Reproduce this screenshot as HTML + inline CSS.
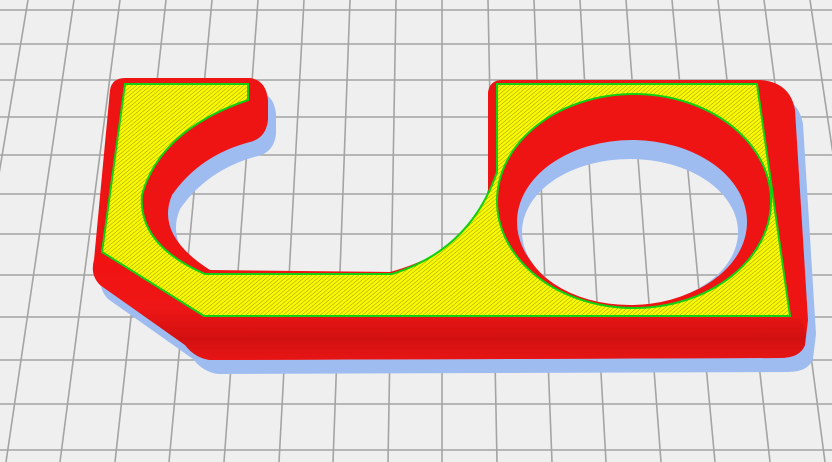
<!DOCTYPE html>
<html><head><meta charset="utf-8"><style>
html,body{margin:0;padding:0;background:#efefef;overflow:hidden}
svg{display:block}
</style></head><body>
<svg width="832" height="462" viewBox="0 0 832 462" xmlns="http://www.w3.org/2000/svg">
<defs>
<linearGradient id="front" x1="0" y1="0" x2="0" y2="1">
<stop offset="0" stop-color="#f21212"/><stop offset="0.5" stop-color="#ee1616"/><stop offset="0.8" stop-color="#d21010"/><stop offset="1" stop-color="#e81515"/>
</linearGradient>
<pattern id="hatch" width="3" height="3" patternUnits="userSpaceOnUse" patternTransform="rotate(-40)">
<rect width="3" height="3" fill="#fafa00"/><rect width="3" height="0.5" fill="#9a9800"/>
</pattern>
</defs>
<rect width="832" height="462" fill="#efefef"/>
<g stroke="#a4a4a4" stroke-width="1.6">
<line x1="0" y1="10" x2="832" y2="10"/><line x1="0" y1="44" x2="832" y2="44"/><line x1="0" y1="80" x2="832" y2="80"/><line x1="0" y1="117" x2="832" y2="117"/><line x1="0" y1="155" x2="832" y2="155"/><line x1="0" y1="194" x2="832" y2="194"/><line x1="0" y1="234" x2="832" y2="234"/><line x1="0" y1="275" x2="832" y2="275"/><line x1="0" y1="317" x2="832" y2="317"/><line x1="0" y1="360" x2="832" y2="360"/><line x1="0" y1="404" x2="832" y2="404"/><line x1="0" y1="450" x2="832" y2="450"/>
<line x1="-18" y1="0" x2="-104" y2="462"/><line x1="28" y1="0" x2="-49" y2="462"/><line x1="74" y1="0" x2="6" y2="462"/><line x1="120" y1="0" x2="60" y2="462"/><line x1="166" y1="0" x2="115" y2="462"/><line x1="212" y1="0" x2="169" y2="462"/><line x1="258" y1="0" x2="224" y2="462"/><line x1="304" y1="0" x2="279" y2="462"/><line x1="350" y1="0" x2="333" y2="462"/><line x1="396" y1="0" x2="388" y2="462"/><line x1="442" y1="0" x2="442" y2="462"/><line x1="488" y1="0" x2="497" y2="462"/><line x1="534" y1="0" x2="552" y2="462"/><line x1="580" y1="0" x2="606" y2="462"/><line x1="626" y1="0" x2="661" y2="462"/><line x1="672" y1="0" x2="715" y2="462"/><line x1="718" y1="0" x2="770" y2="462"/><line x1="764" y1="0" x2="825" y2="462"/><line x1="810" y1="0" x2="879" y2="462"/><line x1="856" y1="0" x2="934" y2="462"/>
</g>
<path transform="translate(8,14)" fill="#9fbcf0" d="M110,90 Q112,78 125,78 L250,78 Q266,80 268,100 L268,120 Q266,138 250,142 Q200,155 172,195 Q155,235 210,270 L390,272 Q470,250 488,190 L488,92 Q490,80 502,80 L760,80 Q790,82 795,110 L808,320 L805,345 Q800,358 780,358 L210,360 Q195,358 185,345 L100,285 Q90,275 94,260 Z"/>
<path fill="#ee1414" d="M110,90 Q112,78 125,78 L250,78 Q266,80 268,100 L268,120 Q266,138 250,142 Q200,155 172,195 Q155,235 210,270 L390,272 Q470,250 488,190 L488,92 Q490,80 502,80 L760,80 Q790,82 795,110 L808,320 L805,345 Q800,358 780,358 L210,360 Q195,358 185,345 L100,285 Q90,275 94,260 Z"/>
<path fill="url(#front)" d="M202,316 L800,318 L806,330 L805,345 Q800,358 780,358 L210,360 Q195,358 185,345 L100,285 Q90,275 94,260 L100,256 Z"/>
<path fill="url(#hatch)" stroke="#10d010" stroke-width="2" d="M125,84 L248,84 L248,100 Q160,130 142,195 Q138,245 205,274 L392,274 Q470,250 497,172 L497,84 L757,84 L790,316 L204,316 L102,252 Z"/>
<ellipse cx="634" cy="201" rx="137" ry="107" fill="#ee1414" stroke="#10d010" stroke-width="2"/>
<ellipse cx="632" cy="222" rx="115" ry="82" fill="#9fbcf0"/>
<ellipse cx="630" cy="232" rx="108" ry="73" fill="#efefef"/>
<clipPath id="ch"><ellipse cx="630" cy="232" rx="108" ry="73"/></clipPath>
<g stroke="#a4a4a4" stroke-width="1.6" clip-path="url(#ch)">
<line x1="0" y1="194" x2="832" y2="194"/><line x1="0" y1="234" x2="832" y2="234"/><line x1="0" y1="275" x2="832" y2="275"/>
<line x1="534" y1="0" x2="552" y2="462"/><line x1="580" y1="0" x2="606" y2="462"/><line x1="626" y1="0" x2="661" y2="462"/><line x1="672" y1="0" x2="715" y2="462"/><line x1="718" y1="0" x2="770" y2="462"/>
</g>
</svg>
</body></html>
